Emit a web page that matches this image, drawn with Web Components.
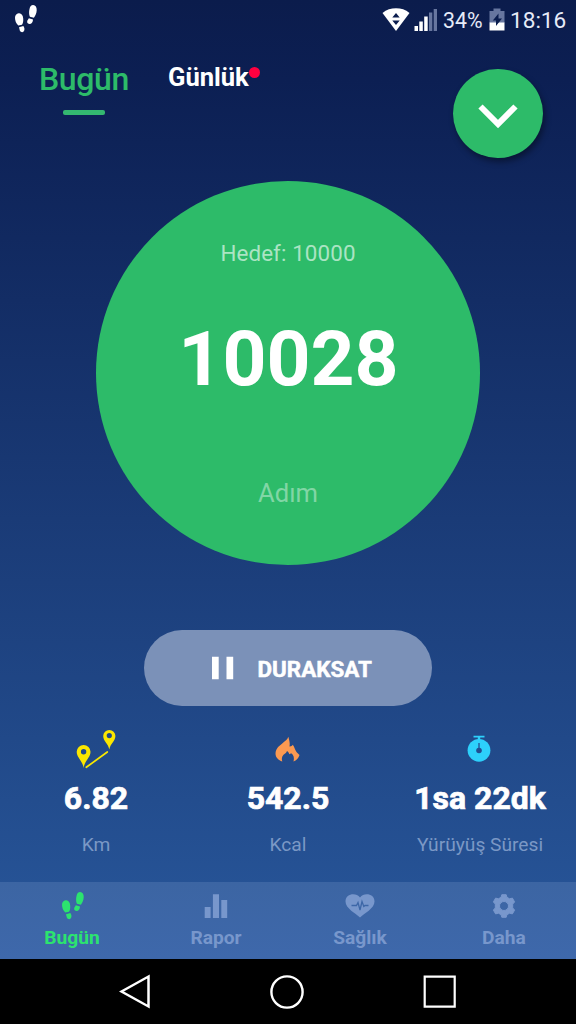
<!DOCTYPE html>
<html lang="tr">
<head>
<meta charset="utf-8">
<title>Adım Sayar</title>
<style>
html,body{margin:0;height:100%;background:#000}
body{font-family:Roboto,"Noto Sans",sans-serif;color:#fff}
</style>
</head>
<body>
<step-app></step-app>
<script>
const define = (name, html) => {
  const tpl = document.createElement('template');
  tpl.innerHTML = html;
  customElements.define(name, class extends HTMLElement {
    constructor() {
      super();
      this.attachShadow({mode: 'open'}).append(tpl.content.cloneNode(true));
    }
  });
};

const ICONS = {
  feet: ['0 0 24 30', '<g fill="currentColor"><path d="M4.600 9.300C7 8.800 9 11 9.200 14.500C9.400 17 9.100 19.300 8 20.700L4.300 21.600C2 19.500 1 16.500 1 13.800C1 11.400 2.500 9.700 4.600 9.300Z"/><path d="M5 23.300L9.400 22.100C10.600 24 11 26 9.600 27.600C8.500 28.600 6.500 28.200 5.900 26.700Z"/><path d="M19.200 1C21.500 1.100 22.900 3.400 22.700 6.300C22.500 9.300 21.600 11.700 19.900 13.800L15.900 12.700C14.900 10.500 14.900 7.700 15.500 5C16 2.500 17.300 .9 19.200 1Z"/><path d="M14.900 14.300L19 15.400C19 18 17.400 20.200 15.300 20C13.300 19.700 12.700 18 13.400 16.500Z"/></g>'],
  wifi: ['0 0 28 24', '<path fill="#fff" d="M.5 5C4.500 1.700 9 .3 14 .3S23.500 1.700 27.500 5L14 23Z"/><path fill="#0b1d4e" d="M10.300 9.500L14 5L17.700 9.500ZM10.300 12.500L14 17L17.700 12.500Z"/>'],
  signal: ['0 0 24 24', '<path fill="#fff" d="M.5 18H4V23H.5ZM5.300 13.500H8.800V23H5.300ZM10.200 8.500H13.700V23H10.200Z"/><path fill="#67769f" d="M15 4.500H18.300V23H15ZM19.700 1H23V23H19.700Z"/>'],
  battery: ['0 0 16 24', '<path fill="#67769f" d="M.5 3H4.500V.5H11.500V3H15.500V15H.5Z"/><path fill="#fff" d="M.5 14.500H15.500V22.500H.5Z"/><path fill="#0b1d4e" d="M9.500 5.500V10.500H13L7 18V12.500H3.800Z"/>'],
  chevron: ['0 0 40 26', '<path d="M2.500 3.500L20 21L37.500 3.500" fill="none" stroke="#fff" stroke-width="6"/>'],
  pause: ['0 0 24 24', '<path fill="#fff" d="M1 .8H7.700V23.200H1ZM15.500 .8H22.200V23.200H15.500Z"/>'],
  route: ['0 0 42 42', '<path d="M12.300 38.300L33.300 23" stroke="#f9e800" stroke-width="1.700" stroke-linecap="round"/><path fill="#fbe600" fill-rule="evenodd" d="M9.600 39C8.600 32 2.700 28.500 2.700 22.800A6.900 6.900 0 0 1 16.500 22.800C16.500 28.500 10.600 32 9.600 39ZM9.600 20A2.700 2.700 0 1 0 9.600 25.400A2.700 2.700 0 1 0 9.600 20ZM35.300 20.500C34.300 14.500 29.200 12 29.200 7A6.100 6.100 0 0 1 41.400 7C41.400 12 36.300 14.500 35.300 20.500ZM35.300 4A2.600 2.600 0 1 0 35.300 9.200A2.600 2.600 0 1 0 35.300 4Z"/>'],
  flame: ['0 0 26 26', '<path fill="#fb9951" d="M13.300 .8C14.300 4 15.200 7.500 14.500 10.500C16 10.700 17 10 17.800 8.800C19.500 11 20 14 21.500 16C22.700 17.500 24 18.200 24.500 19C23.500 22 21.500 24.500 18.500 25.500C19.500 22 18.800 19 16.200 17.200L14.300 18.200C13.800 17 13.600 16 12 15C11.500 16.500 10.500 17.500 8.500 18.700C6.700 20.500 6.500 23 7.300 25.500C3.500 24.500 .6 21.500 .5 17.800C.6 11.800 5 9.500 7.800 7C10 5 12.500 4 13.300 .8Z"/>'],
  timer: ['0 0 24 28', '<path fill="#2dd0fb" d="M6.500 .8H17.500V2.500H13.200V5.200H10.800V2.500H6.500Z"/><circle cx="12" cy="15.300" r="11.400" fill="#2dd0fb"/><circle cx="12" cy="15.500" r="2.800" fill="#224d91"/><path d="M12 8V15.500" stroke="#224d91" stroke-width="1.300"/>'],
  bars: ['0 0 24 26', '<path fill="currentColor" d="M.7 14H6.600V25H.7ZM8.900 1.200H15V25H8.900ZM17.300 7H23.200V25H17.300Z"/>'],
  heart: ['0 0 30 26', '<path fill="currentColor" d="M15 24.500C11 20.500 .5 15.500 .5 8.500C.5 .5 11 -1 15 4.500C19 -1 29.500 .5 29.500 8.500C29.500 15.500 19 20.500 15 24.500Z"/><path d="M6.500 12.500H11.500L13 9.500L15 17L17 8.500L18.800 13.500L20 12.500H23.500" fill="none" stroke="#3d67a7" stroke-width="1.300"/>'],
  gear: ['0 0 24 24', '<path fill="currentColor" stroke="currentColor" stroke-width="1" stroke-linejoin="round" fill-rule="evenodd" d="M9.800 .7H14.200L14.900 3.300L17.600 4.800L20.400 4.100L22.600 7.900L20.700 10.100V13.900L22.600 16.100L20.400 19.900L17.600 19.200L14.900 20.700L14.200 23.300H9.800L9.100 20.700L6.400 19.200L3.600 19.900L1.400 16.100L3.300 13.900V10.100L1.400 7.900L3.600 4.100L6.400 4.800L9.100 3.300ZM12 7.500A4.500 4.500 0 1 0 12 16.500A4.500 4.500 0 1 0 12 7.500Z"/>'],
  back: ['0 0 34 36', '<path d="M2.500 17.500L29.500 2.500V32.500Z" fill="none" stroke="#fff" stroke-width="2.500"/>'],
  home: ['0 0 36 36', '<circle cx="18" cy="18" r="15.600" fill="none" stroke="#fff" stroke-width="2.400"/>'],
  recent: ['0 0 36 36', '<path d="M2.700 2.700H32.700V32.700H2.700Z" fill="none" stroke="#fff" stroke-width="2.200"/>']
};
customElements.define('app-icon', class extends HTMLElement {
  connectedCallback() {
    if (this.shadowRoot) return;
    const [box, shapes] = ICONS[this.getAttribute('name')];
    this.attachShadow({mode: 'open'}).innerHTML =
      `<style>:host{display:block;flex:none}svg{display:block;width:100%;height:100%}</style><svg viewBox="${box}">${shapes}</svg>`;
  }
});

define('status-bar', `<style>
:host{display:flex;height:40px;align-items:flex-start;box-sizing:border-box;padding:0 10px 0 14px;color:#e6ebf8}
.feet{width:24px;height:30px;margin-top:4px;color:#fff}
.wifi{width:28px;height:24px;margin:8px 4px 0 auto}
.sig{width:24px;height:24px;margin:7.500px 5px 0 0}
.bat{width:16px;height:24px;margin:8px 5px 0 6px}
span{line-height:41px;white-space:nowrap}
.p{font-size:21.300px;width:40px}.t{font-size:22.600px;width:56px}
</style><app-icon class="feet" name="feet"></app-icon><app-icon class="wifi" name="wifi"></app-icon><app-icon class="sig" name="signal"></app-icon><span class="p"><slot name="battery"></slot></span><app-icon class="bat" name="battery"></app-icon><span class="t"><slot name="time"></slot></span>`);

define('top-tabs', `<style>
:host{display:flex;height:141px;box-sizing:border-box;padding:0 33.500px 0 39px}
.on{width:90px;color:#2dbb69;font:500 32px/40px Roboto,sans-serif;letter-spacing:-.350px;padding-top:18.500px}
.on i{display:block;width:41.500px;height:5px;border-radius:2px;background:#34b870;margin:11.500px auto 0}
.off{position:relative;margin-left:39px;font:700 25.600px/40px Roboto,sans-serif;letter-spacing:-.050px;padding-top:17px;height:40px}
.off i{position:absolute;left:81px;top:26.500px;width:11px;height:11px;border-radius:50%;background:#ff0040}
.btn{margin:28.500px 0 0 auto;width:89.500px;height:89.500px;border-radius:50%;background:#2dbb69;box-shadow:2px 4px 6px rgba(0,0,0,.4);display:grid;place-items:center}
.btn app-icon{width:40px;height:26px;margin-top:5px}
</style><div class="on"><slot name="active"></slot><i></i></div><div class="off"><slot name="other"></slot><i></i></div><div class="btn"><app-icon name="chevron"></app-icon></div>`);

define('step-dial', `<style>
:host{display:flex;flex-direction:column;align-items:center;width:384px;height:384px;margin:0 auto;border-radius:50%;background:#2dbb69;white-space:nowrap}
.g{font-size:22.400px;line-height:30px;margin-top:57px;color:#abe4c3;letter-spacing:.1px}
.n{font-size:76.800px;font-weight:700;line-height:90px;margin-top:46px;padding-left:1px}
.u{font-size:25.600px;line-height:34px;margin-top:72px;color:#81d6a5}
</style><div class="g"><slot name="goal"></slot></div><div class="n"><slot name="count"></slot></div><div class="u"><slot name="unit"></slot></div>`);

define('pause-button', `<style>
:host{display:flex;align-items:center;box-sizing:border-box;width:288px;height:76.500px;margin:64.500px auto 0;border-radius:39px;background:#7b91b8;padding-left:67px;font:700 22.400px/30px Roboto,sans-serif;-webkit-text-stroke:.5px #fff}
app-icon{width:24px;height:24px;margin-right:22.500px}
span{padding-top:1.500px}
</style><app-icon name="pause"></app-icon><span><slot></slot></span>`);

define('stat-item', `<style>
:host{display:flex;flex-direction:column;align-items:center;flex:1;width:0;white-space:nowrap}
.i{height:50px;display:flex;flex-direction:column;align-items:center}
.v{font-size:32px;font-weight:700;line-height:40px;margin-top:2px;-webkit-text-stroke:.7px #fff}
.l{font-size:19.200px;line-height:26px;margin-top:14px;color:#7b98c5}
</style><div class="i"><slot name="icon"></slot></div><div class="v"><slot name="value"></slot></div><div class="l"><slot></slot></div>`);

define('stat-row', `<style>
:host{display:flex;height:156px}
.route{width:42px;height:42px;margin:3px 2px 0 0}
.flame{width:26px;height:26px;margin:10px 1px 0 0}
.timer{width:24px;height:28px;margin:9px 2px 0 0}
</style>
<stat-item><app-icon slot="icon" class="route" name="route"></app-icon><span slot="value">6.82</span>Km</stat-item>
<stat-item><app-icon slot="icon" class="flame" name="flame"></app-icon><span slot="value">542.5</span>Kcal</stat-item>
<stat-item><app-icon slot="icon" class="timer" name="timer"></app-icon><span slot="value">1sa 22dk</span>Yürüyüş Süresi</stat-item>`);

define('nav-item', `<style>
:host{display:flex;flex-direction:column;align-items:center;flex:1;width:0;color:#7897cc;font:700 19.200px/26px Roboto,sans-serif}
:host([active]){color:#2ce36f}
.i{height:32px;margin-top:8px;display:flex;align-items:center}
.l{margin-top:3px}
</style><div class="i"><slot name="icon"></slot></div><div class="l"><slot></slot></div>`);

define('bottom-nav', `<style>
:host{display:flex;height:77px;background:linear-gradient(#3c65a3,#3e68ab)}
.feet{width:24px;height:30px;margin:0 0 0 1px}.bars{width:24px;height:26px}.heart{width:30px;height:26px}.gear{width:24px;height:24px}
</style>
<nav-item active><app-icon slot="icon" class="feet" name="feet"></app-icon>Bugün</nav-item>
<nav-item><app-icon slot="icon" class="bars" name="bars"></app-icon>Rapor</nav-item>
<nav-item><app-icon slot="icon" class="heart" name="heart"></app-icon>Sağlık</nav-item>
<nav-item><app-icon slot="icon" class="gear" name="gear"></app-icon>Daha</nav-item>`);

define('system-nav', `<style>
:host{display:flex;height:65px;background:#000;box-sizing:border-box;padding:14.500px 118.500px 0 119px;justify-content:space-between}
app-icon{width:36px;height:36px}.b{width:34px}
</style><app-icon class="b" name="back"></app-icon><app-icon name="home"></app-icon><app-icon name="recent"></app-icon>`);

define('step-app', `<style>
:host{display:block;width:576px;height:1024px;overflow:hidden}
main{display:flex;flex-direction:column;height:959px;background:linear-gradient(#0b1c4c,#0c1f53 80px,#28579b)}
.s{flex:1}
</style>
<main>
<status-bar><span slot="battery">34%</span><span slot="time">18:16</span></status-bar>
<top-tabs><span slot="active">Bugün</span><span slot="other">Günlük</span></top-tabs>
<step-dial><span slot="goal">Hedef: 10000</span><span slot="count">10028</span><span slot="unit">Adım</span></step-dial>
<pause-button>DURAKSAT</pause-button>
<div class="s"></div>
<stat-row></stat-row>
<bottom-nav></bottom-nav>
</main>
<system-nav></system-nav>`);
</script>
</body>
</html>
